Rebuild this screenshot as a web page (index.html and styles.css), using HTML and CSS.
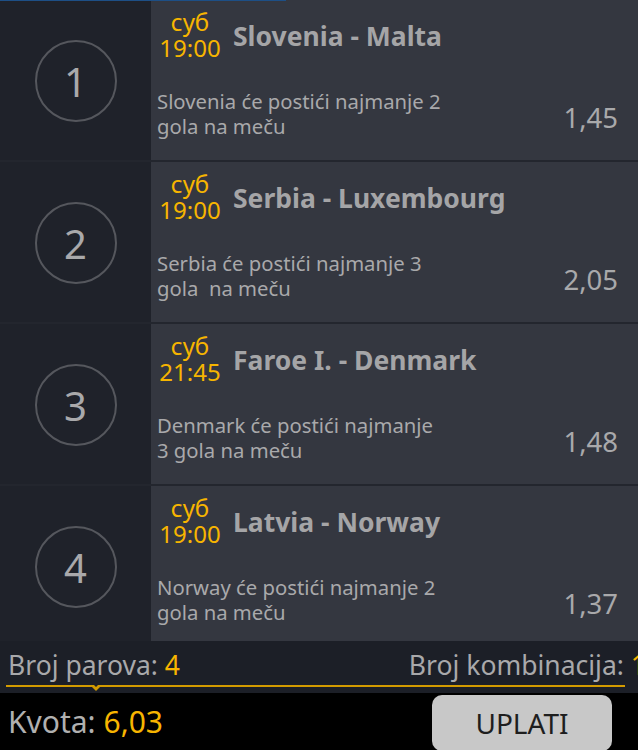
FILE: index.html
```html
<!DOCTYPE html>
<html>
<head>
<meta charset="utf-8">
<link rel="stylesheet" href="styles.css">
</head>
<body>
<div class="app">
  <div class="topline"></div>
  <div class="list">
    <div class="row">
      <div class="num"><div class="circle">1</div></div>
      <div class="card">
        <div class="head">
          <div class="time"><span>суб</span><span>19:00</span></div>
          <div class="title">Slovenia - Malta</div>
        </div>
        <div class="body">
          <div class="desc">Slovenia će postići najmanje 2<br>gola na meču</div>
          <div class="odd">1,45</div>
        </div>
      </div>
    </div>
    <div class="row">
      <div class="num"><div class="circle">2</div></div>
      <div class="card">
        <div class="head">
          <div class="time"><span>суб</span><span>19:00</span></div>
          <div class="title">Serbia - Luxembourg</div>
        </div>
        <div class="body">
          <div class="desc">Serbia će postići najmanje 3<br>gola&nbsp; na meču</div>
          <div class="odd">2,05</div>
        </div>
      </div>
    </div>
    <div class="row">
      <div class="num"><div class="circle">3</div></div>
      <div class="card">
        <div class="head">
          <div class="time"><span>суб</span><span>21:45</span></div>
          <div class="title">Faroe I. - Denmark</div>
        </div>
        <div class="body">
          <div class="desc">Denmark će postići najmanje<br>3 gola na meču</div>
          <div class="odd">1,48</div>
        </div>
      </div>
    </div>
    <div class="row">
      <div class="num"><div class="circle">4</div></div>
      <div class="card">
        <div class="head">
          <div class="time"><span>суб</span><span>19:00</span></div>
          <div class="title">Latvia - Norway</div>
        </div>
        <div class="body">
          <div class="desc">Norway će postići najmanje 2<br>gola na meču</div>
          <div class="odd">1,37</div>
        </div>
      </div>
    </div>
  </div>
  <div class="summary">
    <div class="stats">
      <div>Broj parova: <span class="hl">4</span></div>
      <div>Broj kombinacija: <span class="hl">1</span></div>
    </div>
    <div class="underline"><span class="caret"></span></div>
  </div>
  <div class="footer">
    <div class="kvota">Kvota: <span class="hl">6,03</span></div>
    <div class="btn">UPLATI</div>
  </div>
</div>
</body>
</html>
```

FILE: styles.css
```css
* { box-sizing: border-box; }
html, body { margin: 0; padding: 0; }
body {
  width: 638px;
  height: 750px;
  overflow: hidden;
  background: #000;
  font-family: "Noto Sans", "Open Sans", sans-serif;
  color: #a9a9ab;
}
.app { display: flex; flex-direction: column; height: 750px; position: relative; }
.topline {
  position: absolute; left: 0; top: 0; width: 286px; height: 1px; background: #1d4f86;
}
.list { height: 641px; flex: none; overflow: hidden; background: #23262e; }
.row {
  display: flex;
  height: 162px;
  border-bottom: 2px solid #23262e;
}
.num {
  width: 151px;
  flex: none;
  background: #1f222a;
  display: flex;
  align-items: center;
  justify-content: center;
}
.circle {
  width: 82px; height: 82px;
  border: 2px solid #55575d;
  border-radius: 50%;
  display: flex; align-items: center; justify-content: center;
  font-size: 40px;
  color: #a9a9ab;
  margin-top: 2px;
}
.card {
  flex: 1;
  background: #343740;
  padding: 9px 20px 0 6px;
  display: flex; flex-direction: column;
}
.head { display: flex; align-items: center; gap: 10px; }
.time {
  width: 66px;
  flex: none;
  display: flex; flex-direction: column; align-items: center;
  color: #f7b500;
  font-size: 24px;
  line-height: 26px;
}
.title { font-size: 26.5px; font-weight: 700; color: #a5a5a7; margin-top: 2px; white-space: nowrap; }
.body { display: flex; align-items: center; justify-content: space-between; margin-top: 28px; }
.desc { font-size: 20.3px; line-height: 25px; color: #a9a9ab; white-space: nowrap; }
.odd { font-size: 27.5px; color: #a9a9ab; margin-top: 6px; }
.summary {
  height: 52px;
  flex: none;
  background: #1c1f27;
  padding: 8px 0 0 8px;
  position: relative;
}
.stats {
  display: flex; justify-content: space-between;
  font-size: 26.5px; line-height: 32px;
  color: #a9a9ab;
  white-space: nowrap;
  margin-right: -8px;
}
.underline {
  position: absolute; left: 6px; right: 13px; top: 44px;
  height: 2px; background: #d39b00;
}
.caret {
  position: absolute; left: 84px; top: 0;
  width: 0; height: 0;
  border-left: 6px solid transparent;
  border-right: 6px solid transparent;
  border-top: 6px solid #d39b00;
}
.caret::after {
  content: ""; position: absolute; left: -4px; top: -8px;
  border-left: 4px solid transparent;
  border-right: 4px solid transparent;
  border-top: 4px solid #1c1f27;
}
.hl { color: #f7b500; }
.footer {
  flex: 1;
  background: #000;
  border-bottom: 2px solid #4a4a4a;
  display: flex; align-items: flex-start; justify-content: space-between;
  padding: 2px 26px 0 8px;
}
.kvota { font-size: 30px; line-height: 54px; color: #b0b0b0; }
.btn {
  width: 180px; height: 56px;
  background: #c8c8c8;
  border-radius: 10px;
  color: #1e1e1e;
  font-size: 28px;
  display: flex; align-items: center; justify-content: center;
}
```
